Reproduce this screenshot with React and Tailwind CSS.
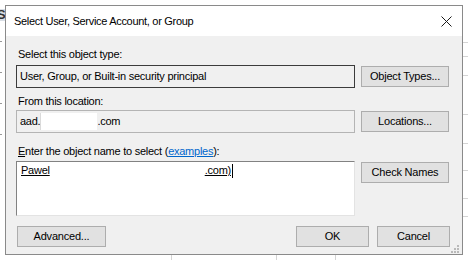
import React from 'react';

const font = { fontFamily: '"Liberation Sans", Arial, sans-serif' };

const Button = ({ children, className = '' }) => (
  <button
    type="button"
    className={`h-[21px] bg-[#e1e1e1] border border-[#adadad] text-[11px] leading-[15px] tracking-[-0.2px] text-black flex items-center justify-center ${className}`}
  >
    {children}
  </button>
);

const SizeGrip = () => (
  <div className="absolute right-[3px] bottom-[1px] w-[8px] h-[8px]">
    <svg width="8" height="8" viewBox="0 0 8 8">
      <rect x="6" y="0" width="2" height="2" fill="#b9b9b9" />
      <rect x="3" y="3" width="2" height="2" fill="#b9b9b9" />
      <rect x="6" y="3" width="2" height="2" fill="#b9b9b9" />
      <rect x="0" y="6" width="2" height="2" fill="#b9b9b9" />
      <rect x="3" y="6" width="2" height="2" fill="#b9b9b9" />
      <rect x="6" y="6" width="2" height="2" fill="#b9b9b9" />
    </svg>
  </div>
);

const SelectUserDialog = () => {
  return (
    <div className="w-[458px] h-[250px] border border-[#8a8a8a] bg-[#f0f0f0] flex flex-col shrink-0">
      {/* Title bar */}
      <div className="h-[30px] bg-white flex items-center justify-between pl-[8px] pr-[10px]">
        <span className="text-[11px] leading-[15px] tracking-[-0.3px] text-black mt-[1px]">Select User, Service Account, or Group</span>
        <svg width="11" height="11" viewBox="0 0 11 11" className="mt-[1px]">
          <path d="M0.5 0.5 L10.5 10.5 M10.5 0.5 L0.5 10.5" stroke="#1a1a1a" strokeWidth="1" fill="none" />
        </svg>
      </div>

      {/* Body */}
      <div className="relative flex-1 flex flex-col pl-[10px] pr-[12px] text-[11px] leading-[15px] tracking-[-0.25px] text-black">
        <div className="mt-[11px] pl-[2px]">Select this object type:</div>
        <div className="mt-[3px] flex items-start gap-[6px]">
          <div className="w-[339px] h-[23px] border border-[#3c3c3c] bg-[#f0f0f0] flex items-center pl-[3px]">
            User, Group, or Built-in security principal
          </div>
          <Button className="w-[88px] mt-[1px]">Object Types...</Button>
        </div>

        <div className="mt-[6px] pl-[2px]">From this location:</div>
        <div className="mt-[1px] flex items-start gap-[6px]">
          <div className="w-[339px] h-[23px] border border-[#b4b4b4] bg-[#f0f0f0] flex items-center pl-[3px]">
            <span>aad.</span>
            <span className="inline-block w-[57px] h-[17px] bg-white border-l border-[#dadada]"></span>
            <span>.com</span>
          </div>
          <Button className="w-[88px] mt-[1px]">Locations...</Button>
        </div>

        <div className="mt-[11px] pl-[2px]">
          <span className="underline">E</span>nter the object name to select (
          <span className="text-[#0066cc] underline">examples</span>):
        </div>
        <div className="mt-[2px] flex items-start gap-[6px]">
          <div className="w-[339px] h-[55px] bg-white border-t border-l border-[#828282] border-r border-b border-r-[#e3e3e3] border-b-[#e3e3e3] pl-[4px] pt-[1px]">
            <div className="flex items-center">
              <span className="underline">Pawel</span>
              <span className="inline-block w-[155px]"></span>
              <span className="underline">.com)</span>
              <span className="inline-block w-[1px] h-[14px] bg-black ml-[1px]"></span>
            </div>
          </div>
          <Button className="w-[88px] mt-[1px]">Check Names</Button>
        </div>

        <div className="mt-[10px] flex items-start">
          <Button className="w-[89px] ml-[1px]">Advanced...</Button>
          <div className="flex-1"></div>
          <Button className="w-[73px]">OK</Button>
          <Button className="w-[73px] ml-[8px]">Cancel</Button>
        </div>

        <SizeGrip />
      </div>
    </div>
  );
};

const App = () => {
  return (
    <div className="w-[468px] h-[260px] bg-white overflow-hidden flex flex-col" style={font}>
      <div className="h-[5px] shrink-0"></div>
      <div className="flex">
        {/* left edge of the window behind */}
        <div className="w-[5px] shrink-0 flex flex-col">
          <div className="mt-[4px] h-[12px] bg-[#d9dee5] overflow-hidden">
            <span className="block -ml-[3px] text-[13px] leading-[12px] font-bold text-[#333]">S</span>
          </div>
          <div className="mt-[20px] w-[2px] h-[1px] bg-[#999]"></div>
          <div className="mt-[30px] w-[2px] h-[1px] bg-[#999]"></div>
          <div className="mt-[30px] w-[2px] h-[1px] bg-[#999]"></div>
          <div className="mt-[30px] w-[2px] h-[1px] bg-[#999]"></div>
        </div>

        <SelectUserDialog />

        {/* right edge of the window behind */}
        <div className="w-[5px] shrink-0 flex flex-col">
          <div className="h-[38px] border-b border-[#d4d4d4]"></div>
          <div className="h-[14px] border-b border-[#d4d4d4]"></div>
          <div className="h-[19px] border-b border-[#d4d4d4]"></div>
          <div className="h-[39px] border-b border-[#d4d4d4]"></div>
          <div className="h-[29px] border-b border-[#d4d4d4]"></div>
          <div className="h-[27px] border-b border-[#d4d4d4]"></div>
          <div className="h-[28px] border-b border-[#d4d4d4]"></div>
          <div className="h-[18px] border-b border-[#d4d4d4]"></div>
        </div>
      </div>
      {/* bottom edge of the window behind */}
      <div className="flex h-[5px]">
        <div className="w-[172px] border-r border-[#d4d4d4]"></div>
        <div className="w-[105px] border-r border-[#d4d4d4]"></div>
        <div className="w-[59px] border-r border-[#d4d4d4]"></div>
      </div>
    </div>
  );
};

export default App;
